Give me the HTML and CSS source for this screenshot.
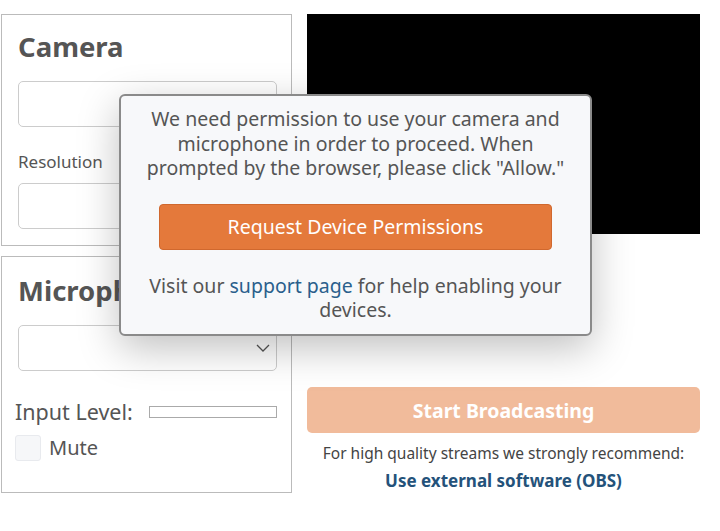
FILE: index.html
```html
<!DOCTYPE html>
<html lang="en">
<head>
    <meta charset="UTF-8">
    <meta name="viewport" content="width=device-width, initial-scale=1.0">
    <title>Broadcast Setup</title>
    <link rel="stylesheet" href="styles.css">
</head>
<body>
    <div class="layout">
        <div class="settings">
            <div class="panel">
                <h2>Camera</h2>
                <div class="field"></div>
                <label class="label">Resolution</label>
                <div class="field"></div>
            </div>

            <div class="panel mic-panel">
                <h2>Microphone</h2>
                <div class="field select">
                    <svg width="14" height="8" viewBox="0 0 14 8"><path d="M1 1l6 6 6-6" fill="none" stroke="#555" stroke-width="1.3"/></svg>
                </div>
                <div class="level-row">
                    <span>Input Level:</span>
                    <div class="meter"></div>
                </div>
                <div class="mute-row">
                    <span class="checkbox"></span>
                    <span>Mute</span>
                </div>
            </div>
        </div>

        <div class="preview">
            <div class="video"></div>
            <button class="broadcast">Start Broadcasting</button>
            <p class="hint">For high quality streams we strongly recommend:</p>
            <a class="obs-link" href="#">Use external software (OBS)</a>
        </div>
    </div>

    <div class="modal">
        <p>We need permission to use your camera and microphone in order to proceed. When prompted by the browser, please click "Allow."</p>
        <button class="request">Request Device Permissions</button>
        <p>Visit our <a href="#">support page</a> for help enabling your devices.</p>
    </div>
</body>
</html>
```

FILE: styles.css
```css
/* base */
body {
    margin: 0;
    font-family: 'Noto Sans', 'Open Sans', sans-serif;
    color: #555;
    background: #fff;
}

.layout {
    display: flex;
    gap: 15px;
    padding: 14px 20px 0 1px;
}

.settings {
    width: 291px;
    display: flex;
    flex-direction: column;
    gap: 10px;
}

.panel {
    border: 1px solid #bbb;
    padding: 14px 14px 16px 16px;
}

.panel h2 {
    margin: 0 0 16px;
    font-size: 27.5px;
    line-height: 36px;
    font-weight: bold;
    color: #555;
}

.field {
    height: 44px;
    border: 1px solid #ccc;
    border-radius: 5px;
}

.label {
    display: block;
    font-size: 17px;
    line-height: 22px;
    margin: 24px 0 10px;
}

.mic-panel {
    padding-top: 16px;
    padding-bottom: 31px;
}

.select {
    display: flex;
    align-items: center;
    justify-content: flex-end;
    padding-right: 6px;
}

.level-row {
    display: flex;
    align-items: center;
    gap: 16px;
    margin: 26px 0 0 -3px;
    font-size: 21.5px;
}

.meter {
    flex: 1;
    height: 10px;
    border: 1px solid #aaa;
}

.mute-row {
    display: flex;
    align-items: center;
    gap: 8px;
    margin: 8px 0 0 -3px;
    font-size: 20px;
}

.checkbox {
    width: 24px;
    height: 24px;
    border: 1px solid #e8eaee;
    background: #f6f7f9;
    border-radius: 3px;
}

/* right column */
.preview {
    flex: 1;
    display: flex;
    flex-direction: column;
    align-items: center;
}

.video {
    width: 100%;
    height: 220px;
    background: #000;
}

.broadcast {
    width: 100%;
    height: 46px;
    margin-top: 153px;
    border: none;
    border-radius: 5px;
    background: #f1bb9b;
    color: #fff;
    font-family: inherit;
    font-size: 19.5px;
    font-weight: bold;
}

.hint {
    margin: 10px 0 0;
    font-size: 15.5px;
    line-height: 20px;
    color: #444;
}

.obs-link {
    margin-top: 6px;
    font-size: 17px;
    font-weight: bold;
    color: #24527a;
    text-decoration: none;
}

/* permission dialog */
.modal {
    position: absolute;
    top: 94px;
    left: 119px;
    width: 433px;
    padding: 11px 18px 11px;
    border: 2px solid #8a8a8a;
    border-radius: 6px;
    background: #f7f8fa;
    text-align: center;
    box-shadow: 0 12px 40px rgba(0, 0, 0, 0.25);
}

.modal p {
    margin: 0;
    font-size: 19.5px;
    line-height: 24.5px;
    color: #555;
}

.modal a {
    color: #2a5f8c;
    text-decoration: none;
}

.request {
    display: block;
    width: 393px;
    height: 46px;
    margin: 23px auto 24px;
    border: 1px solid #d0682e;
    border-radius: 4px;
    background: #e4793b;
    color: #fff;
    font-family: inherit;
    font-size: 19.5px;
}
```
